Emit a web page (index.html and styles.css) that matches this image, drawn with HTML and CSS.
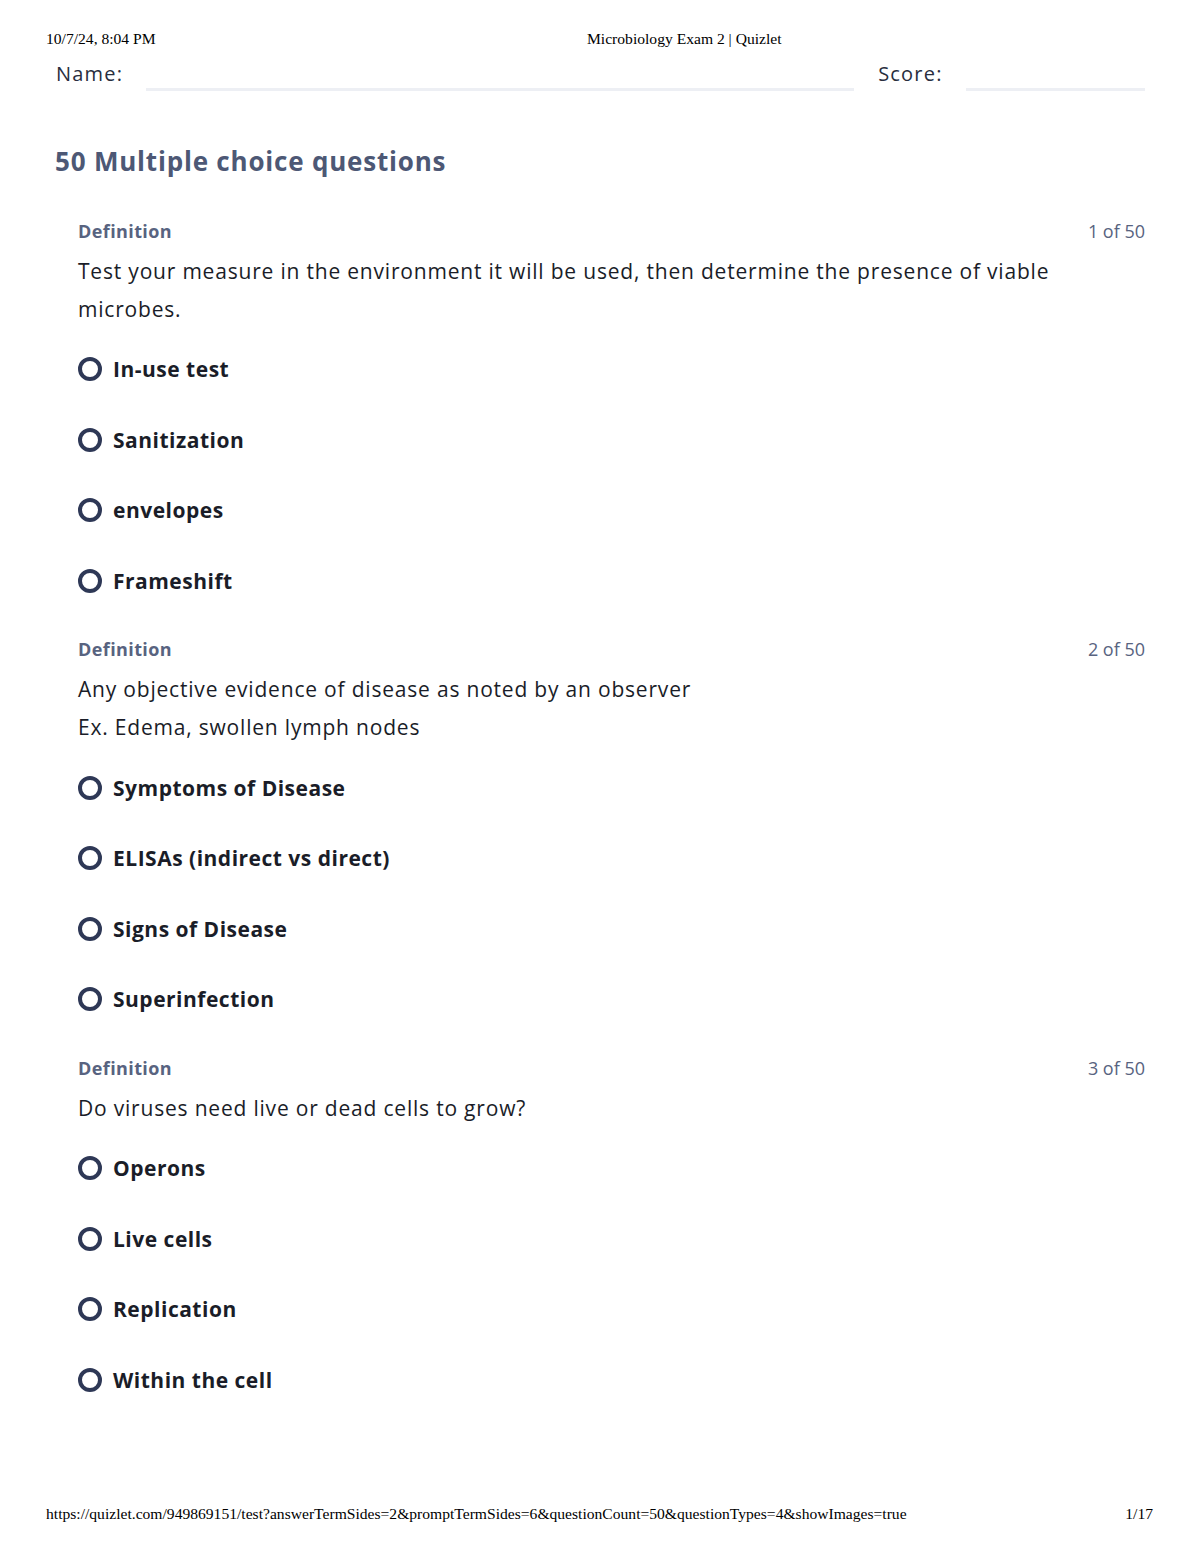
FILE: index.html
```html
<!DOCTYPE html>
<html>
<head>
<meta charset="utf-8">
<title>Microbiology Exam 2 | Quizlet</title>
<link rel="stylesheet" href="styles.css">
</head>
<body>
<div class="page">
  <div class="print-head">
    <span class="ph-date">10/7/24, 8:04 PM</span>
    <span class="ph-title">Microbiology Exam 2 | Quizlet</span>
  </div>

  <div class="name-row">
    <span class="field-label">Name:</span>
    <span class="field-line name-line"></span>
    <span class="field-label score-label">Score:</span>
    <span class="field-line score-line"></span>
  </div>

  <h1 class="heading">50 Multiple choice questions</h1>

  <section class="question">
    <div class="q-head"><span class="q-label">Definition</span><span class="q-count">1 of 50</span></div>
    <div class="q-text">Test your measure in the environment it will be used, then determine the presence of viable microbes.</div>
    <ul class="options">
      <li class="option"><span class="radio"></span><span>In-use test</span></li>
      <li class="option"><span class="radio"></span><span>Sanitization</span></li>
      <li class="option"><span class="radio"></span><span>envelopes</span></li>
      <li class="option"><span class="radio"></span><span>Frameshift</span></li>
    </ul>
  </section>

  <section class="question">
    <div class="q-head"><span class="q-label">Definition</span><span class="q-count">2 of 50</span></div>
    <div class="q-text">Any objective evidence of disease as noted by an observer<br>Ex. Edema, swollen lymph nodes</div>
    <ul class="options">
      <li class="option"><span class="radio"></span><span>Symptoms of Disease</span></li>
      <li class="option"><span class="radio"></span><span>ELISAs (indirect vs direct)</span></li>
      <li class="option"><span class="radio"></span><span>Signs of Disease</span></li>
      <li class="option"><span class="radio"></span><span>Superinfection</span></li>
    </ul>
  </section>

  <section class="question">
    <div class="q-head"><span class="q-label">Definition</span><span class="q-count">3 of 50</span></div>
    <div class="q-text">Do viruses need live or dead cells to grow?</div>
    <ul class="options">
      <li class="option"><span class="radio"></span><span>Operons</span></li>
      <li class="option"><span class="radio"></span><span>Live cells</span></li>
      <li class="option"><span class="radio"></span><span>Replication</span></li>
      <li class="option"><span class="radio"></span><span>Within the cell</span></li>
    </ul>
  </section>

  <div class="print-foot">
    <span class="pf-url">https://quizlet.com/949869151/test?answerTermSides=2&amp;promptTermSides=6&amp;questionCount=50&amp;questionTypes=4&amp;showImages=true</span>
    <span class="pf-page">1/17</span>
  </div>
</div>
</body>
</html>
```

FILE: styles.css
```css
html, body {
  margin: 0;
  padding: 0;
  background: #ffffff;
}

.page {
  width: 1200px;
  min-height: 1553px;
  box-sizing: border-box;
  display: flex;
  flex-direction: column;
  font-family: "Open Sans", Lato, sans-serif;
  color: #282e3e;
}

.print-head {
  display: flex;
  align-items: center;
  padding: 31px 0 0 46px;
  height: 16px;
  font-family: "Liberation Serif", "Times New Roman", serif;
  font-size: 15.6px;
  line-height: 16px;
  color: #000;
}

.ph-date {
  width: 541px;
}

.name-row {
  display: flex;
  align-items: flex-end;
  margin: 12px 55px 0 56px;
  height: 32px;
}

.field-label {
  font-size: 20px;
  line-height: 26px;
  letter-spacing: 1.2px;
  color: #282e3e;
  padding-bottom: 4px;
}

.field-line {
  height: 3px;
  background: #edeff4;
}

.name-line {
  margin-left: 23px;
  width: 708px;
}

.score-label {
  margin-left: 24px;
}

.score-line {
  margin-left: 23px;
  flex: 1;
}

.heading {
  margin: 54px 0 0 55px;
  font-size: 26px;
  line-height: 32px;
  font-weight: 700;
  letter-spacing: 0.8px;
  color: #4d5875;
}

.question {
  margin: 42px 55px 0 78px;
}

.question + .question {
  margin-top: 21px;
}

.q-head {
  display: flex;
  justify-content: space-between;
  align-items: center;
  height: 24px;
}

.q-label {
  font-size: 18px;
  font-weight: 700;
  letter-spacing: 0.4px;
  color: #586380;
}

.q-count {
  font-size: 18px;
  color: #586380;
}

.q-text {
  margin-top: 9px;
  font-size: 21px;
  line-height: 38px;
  letter-spacing: 0.8px;
  color: #1a1d28;
}

.options {
  list-style: none;
  margin: 6px 0 0 0;
  padding: 0;
}

.option {
  display: flex;
  align-items: center;
  gap: 11px;
  height: 70.6px;
  font-size: 21px;
  font-weight: 700;
  letter-spacing: 0.5px;
  color: #1a1d28;
}

.radio {
  width: 24px;
  height: 24px;
  box-sizing: border-box;
  border: 4px solid #2e3856;
  border-radius: 50%;
  flex: none;
}

.print-foot {
  margin-top: auto;
  display: flex;
  justify-content: space-between;
  align-items: center;
  padding: 0 47px 31px 46px;
  height: 16px;
  font-family: "Liberation Serif", "Times New Roman", serif;
  font-size: 15.6px;
  line-height: 16px;
  color: #000;
}
```
